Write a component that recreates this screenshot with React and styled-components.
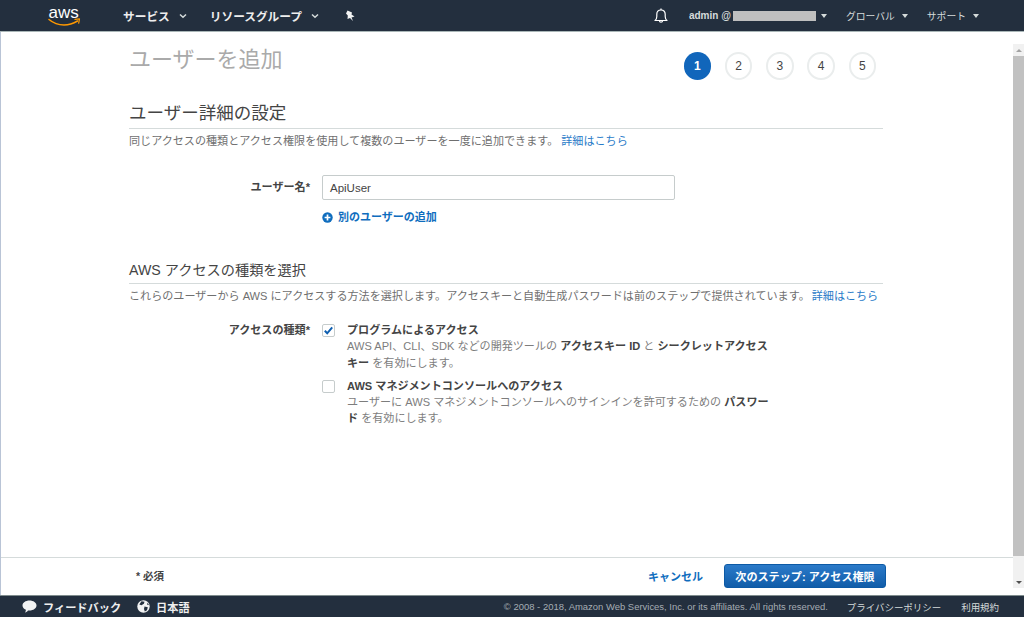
import React from 'react';
import styled, { createGlobalStyle } from 'styled-components';

const FONT = `"Liberation Sans", "Noto Sans CJK JP", sans-serif`;

const GlobalStyle = createGlobalStyle`
  html, body {
    margin: 0;
    padding: 0;
    height: 100%;
    overflow: hidden;
    background: #fff;
  }
  * { box-sizing: border-box; }
`;

const Page = styled.div`
  display: flex;
  flex-direction: column;
  height: 617px;
  width: 1024px;
  font-family: ${FONT};
  color: #444;
`;

const TopBar = styled.header`
  display: flex;
  align-items: center;
  height: 32px;
  flex-shrink: 0;
  background: #232f3e;
  border-bottom: 1px solid #aab7b8;
  padding-left: 48px;
`;

const Logo = styled.div`
  display: flex;
  width: 75px;
  margin-top: -1px;
`;

const NavItem = styled.div`
  display: flex;
  align-items: center;
  gap: 9px;
  color: #eee;
  font-size: 11.7px;
  font-weight: 700;
  margin-right: 23px;
  white-space: nowrap;
`;

const Pin = styled.div`
  display: flex;
  margin-left: 3px;
`;

const TopRight = styled.div`
  display: flex;
  align-items: center;
  margin-left: auto;
  padding-right: 45px;
`;

const Bell = styled.div`
  display: flex;
  margin-right: 21px;
`;

const Account = styled.div`
  display: flex;
  align-items: center;
  color: #d5dbdb;
  font-size: ${(p) => (p.$user ? 10 : 9.8)}px;
  font-weight: ${(p) => (p.$user ? 700 : 400)};
  white-space: nowrap;
  margin-left: ${(p) => p.$gap || 0}px;
`;

const Masked = styled.span`
  display: inline-block;
  width: 83px;
  height: 10px;
  margin-left: 2px;
  background: #bfbfbf;
`;

const Caret = styled.span`
  display: inline-block;
  width: 0;
  height: 0;
  margin-left: ${(p) => p.$gap || 7}px;
  border-left: 3.5px solid transparent;
  border-right: 3.5px solid transparent;
  border-top: 4px solid #d5dbdb;
`;

const Middle = styled.div`
  flex: 1;
  display: flex;
  min-height: 0;
  border-left: 1px solid #b9c4d6;
`;

const Column = styled.div`
  flex: 1;
  display: flex;
  flex-direction: column;
  min-width: 0;
`;

const Content = styled.main`
  flex: 1;
  padding: 0 130px 0 128px;
`;

const TitleRow = styled.div`
  display: flex;
  justify-content: space-between;
  height: 68px;
`;

const Title = styled.h1`
  margin: 13px 0 0;
  font-size: 22px;
  line-height: 30px;
  font-weight: 400;
  color: #aaa;
`;

const Steps = styled.ol`
  display: flex;
  gap: 13.75px;
  list-style: none;
  margin: 20px 7px 0 0;
  padding: 0;
`;

const Step = styled.li`
  display: flex;
  align-items: center;
  justify-content: center;
  width: 27.5px;
  height: 27.5px;
  border-radius: 50%;
  font-size: 12px;
  font-weight: ${(p) => (p.$active ? 700 : 400)};
  color: ${(p) => (p.$active ? '#fff' : '#444')};
  background: ${(p) => (p.$active ? '#1166bb' : '#fff')};
  border: ${(p) => (p.$active ? 'none' : '2px solid #eaeded')};
`;

const Section = styled.section`
  margin-top: ${(p) => p.$top || 0}px;
`;

const SectionTitle = styled.h2`
  margin: 0;
  padding-bottom: 2px;
  font-size: ${(p) => p.$size}px;
  line-height: ${(p) => p.$line}px;
  font-weight: 400;
  color: #444;
  border-bottom: 1px solid #d5dbdb;
`;

const Desc = styled.p`
  margin: 0;
  font-size: 11.08px;
  line-height: 25px;
  color: #6f6f6f;
  white-space: nowrap;
`;

const Link = styled.a`
  color: #2a7bc8;
  margin-left: ${(p) => p.$gap || 0}px;
`;

const FormRow = styled.div`
  display: grid;
  grid-template-columns: 181px 1fr;
  column-gap: 12px;
  margin-top: ${(p) => p.$top || 0}px;
`;

const Label = styled.label`
  font-size: 11.08px;
  line-height: ${(p) => p.$line}px;
  font-weight: 700;
  color: #444;
  text-align: right;
`;

const TextInput = styled.div`
  display: flex;
  align-items: center;
  width: 353px;
  height: 25px;
  padding-left: 7px;
  font-size: 11.5px;
  color: #444;
  background: #fff;
  border: 1px solid #c6cccc;
  border-radius: 2px;
`;

const AddLink = styled.a`
  display: flex;
  align-items: center;
  gap: 5px;
  margin-top: 10px;
  font-size: 11px;
  line-height: 15px;
  font-weight: 700;
  color: #0f6dbe;
`;

const CheckRow = styled.div`
  display: flex;
  gap: 12px;
  width: 447px;
  margin-bottom: 7px;
`;

const CheckBox = styled.span`
  display: flex;
  align-items: center;
  justify-content: center;
  flex-shrink: 0;
  width: 13px;
  height: 13px;
  margin-top: 2px;
  background: #fff;
  border: 1px solid #c6cccc;
  border-radius: 2px;
`;

const CheckText = styled.div`
  font-size: 11.08px;
  line-height: 16.3px;
  color: #7d7d7d;
`;

const CheckTitle = styled.div`
  font-weight: 700;
  color: #444;
`;

const Strong = styled.b`
  color: #444;
`;

const ActionBar = styled.div`
  display: flex;
  align-items: center;
  height: 38px;
  flex-shrink: 0;
  padding: 0 127px 1px 135px;
  border-top: 1px solid #d5dbdb;
`;

const Required = styled.span`
  margin-bottom: 2px;
  font-size: 10.5px;
  font-weight: 700;
  color: #444;
`;

const Cancel = styled.a`
  margin-left: auto;
  font-size: 11px;
  font-weight: 700;
  color: #0f6dbe;
`;

const NextButton = styled.button`
  height: 24px;
  width: 162px;
  margin-left: 21px;
  padding: 0;
  font-family: ${FONT};
  font-size: 11.1px;
  font-weight: 700;
  color: #fff;
  background: linear-gradient(#2b7ac9, #115da9);
  border: 1px solid #0d5aa5;
  border-radius: 3px;
`;

const Scrollbar = styled.div`
  display: flex;
  flex-direction: column;
  width: 11px;
  flex-shrink: 0;
  margin-top: 12px;
  margin-bottom: 7px;
  background: #f1f1f1;
`;

const ScrollButton = styled.div`
  display: flex;
  align-items: center;
  justify-content: center;
  height: 12px;
  flex-shrink: 0;
`;

const Arrow = styled.span`
  width: 0;
  height: 0;
  border-left: 3px solid transparent;
  border-right: 3px solid transparent;
  border-bottom: ${(p) => (p.$up ? '3px solid #a3a3a3' : 'none')};
  border-top: ${(p) => (p.$up ? 'none' : '3px solid #505050')};
`;

const ScrollThumb = styled.div`
  flex: 1;
  margin-bottom: 20px;
  background: #c1c1c1;
`;

const Footer = styled.footer`
  display: flex;
  align-items: center;
  height: 22px;
  flex-shrink: 0;
  padding: 0 25px 0 22px;
  background: #232f3e;
  border-top: 1px solid #7f8c8d;
`;

const FooterItem = styled.div`
  display: flex;
  align-items: center;
  gap: 6px;
  margin-right: 16px;
  color: #eee;
  font-size: 11.2px;
  font-weight: 700;
`;

const FooterRight = styled.div`
  display: flex;
  align-items: center;
  margin-left: auto;
  font-size: 9.46px;
  color: #a5adb3;
`;

const FooterLink = styled.a`
  margin-left: ${(p) => p.$gap}px;
  color: #d5dbdb;
`;

const AwsLogo = () => (
  <svg width="33" height="24" viewBox="0 0 33 24" fill="none">
    <text x="0.500" y="14.500" fontFamily="Liberation Sans, sans-serif" fontSize="17" fill="#fff">aws</text>
    <path d="M1 16.500c4.500 3.800 10 5.500 15 5.500 4.500 0 9-1.300 13.500-4" stroke="#f90" strokeWidth="1.500" strokeLinecap="round" />
    <path d="M27 16.400l4.500-.6-.8 4.300" stroke="#f90" strokeWidth="1.200" strokeLinecap="round" strokeLinejoin="round" />
  </svg>
);

const Chevron = () => (
  <svg width="8" height="6" viewBox="0 0 8 6" fill="none">
    <path d="M1 1.500l3 2.800 3-2.800" stroke="#d5dbdb" strokeWidth="1.500" />
  </svg>
);

const PinIcon = () => (
  <svg width="12" height="12" viewBox="0 0 12 12" fill="#f2f3f3">
    <path d="M2.500.5L7 2.500l-.5 2 3 2-3 1L8 11 5 8l-2.500 1 .3-3.500L1 3.500z" />
  </svg>
);

const BellIcon = () => (
  <svg width="14" height="16" viewBox="0 0 14 16" fill="none" stroke="#fff" strokeWidth="1.200">
    <path d="M1 12.500c1.300-1 1.800-2 1.800-4V6.200C2.800 3.800 4.600 2 7 2s4.200 1.800 4.200 4.200v2.300c0 2 .5 3 1.800 4z" strokeLinejoin="round" />
    <path d="M5.500 13c0 1.600 3 1.600 3 0M7 .6V2" />
  </svg>
);

const PlusCircle = () => (
  <svg width="11" height="11" viewBox="0 0 11 11">
    <circle cx="5.500" cy="5.500" r="5.200" fill="#0f6dbe" />
    <path d="M5.500 2.600v5.800M2.600 5.500h5.800" stroke="#fff" strokeWidth="1.700" />
  </svg>
);

const CheckMark = () => (
  <svg width="11" height="11" viewBox="0 0 11 11" fill="none">
    <path d="M1.800 5.800l2.400 2.500 5-6" stroke="#0f5fb0" strokeWidth="2" />
  </svg>
);

const BubbleIcon = () => (
  <svg width="15" height="13" viewBox="0 0 15 13" fill="#f2f3f3">
    <path d="M7.500.5c3.900 0 7 2.200 7 5s-3.100 5-7 5c-.5 0-1 0-1.500-.1-.6 1.100-1.700 1.800-3 2 .6-.8.900-1.700.9-2.700C1.700 8.800.5 7.300.5 5.500c0-2.800 3.100-5 7-5z" />
  </svg>
);

const GlobeIcon = () => (
  <svg width="13" height="13" viewBox="0 0 13 13">
    <circle cx="6.500" cy="6.500" r="6.200" fill="#f2f3f3" />
    <path d="M4.500 1.200l3 .6-.6 2-2.400 1.500-2.200-.8zM7.500 6.500l3.300.8-.8 3-2.200 1.300-.8-2.700zM10.600 2.600l1.300 2.400-1.800-.2z" fill="#232f3e" />
  </svg>
);

const STEPS = [1, 2, 3, 4, 5];

const App = () => (
  <Page>
    <GlobalStyle />
    <TopBar>
      <Logo><AwsLogo /></Logo>
      <NavItem>サービス <Chevron /></NavItem>
      <NavItem>リソースグループ <Chevron /></NavItem>
      <Pin><PinIcon /></Pin>
      <TopRight>
        <Bell><BellIcon /></Bell>
        <Account $user>admin @<Masked /><Caret $gap={5} /></Account>
        <Account $gap={19}>グローバル<Caret /></Account>
        <Account $gap={19}>サポート<Caret /></Account>
      </TopRight>
    </TopBar>
    <Middle>
      <Column>
        <Content>
          <TitleRow>
            <Title>ユーザーを追加</Title>
            <Steps>
              {STEPS.map((n) => (
                <Step key={n} $active={n === 1}>{n}</Step>
              ))}
            </Steps>
          </TitleRow>
          <Section>
            <SectionTitle $size={17.5} $line={26}>ユーザー詳細の設定</SectionTitle>
            <Desc>
              同じアクセスの種類とアクセス権限を使用して複数のユーザーを一度に追加できます。
              <Link $gap={3}>詳細はこちら</Link>
            </Desc>
          </Section>
          <FormRow $top={21}>
            <Label $line={24}>ユーザー名*</Label>
            <div>
              <TextInput>ApiUser</TextInput>
              <AddLink><PlusCircle />別のユーザーの追加</AddLink>
            </div>
          </FormRow>
          <Section $top={34}>
            <SectionTitle $size={14.2} $line={22}>AWS アクセスの種類を選択</SectionTitle>
            <Desc>
              これらのユーザーから AWS にアクセスする方法を選択します。アクセスキーと自動生成パスワードは前のステップで提供されています。
              <Link $gap={2}>詳細はこちら</Link>
            </Desc>
          </Section>
          <FormRow $top={13}>
            <Label $line={16.3}>アクセスの種類*</Label>
            <div>
              <CheckRow>
                <CheckBox><CheckMark /></CheckBox>
                <CheckText>
                  <CheckTitle>プログラムによるアクセス</CheckTitle>
                  AWS API、CLI、SDK などの開発ツールの <Strong>アクセスキー ID</Strong> と <Strong>シークレットアクセスキー</Strong> を有効にします。
                </CheckText>
              </CheckRow>
              <CheckRow>
                <CheckBox />
                <CheckText>
                  <CheckTitle>AWS マネジメントコンソールへのアクセス</CheckTitle>
                  ユーザーに AWS マネジメントコンソールへのサインインを許可するための <Strong>パスワード</Strong> を有効にします。
                </CheckText>
              </CheckRow>
            </div>
          </FormRow>
        </Content>
        <ActionBar>
          <Required>* 必須</Required>
          <Cancel>キャンセル</Cancel>
          <NextButton>次のステップ: アクセス権限</NextButton>
        </ActionBar>
      </Column>
      <Scrollbar>
        <ScrollButton><Arrow $up /></ScrollButton>
        <ScrollThumb />
        <ScrollButton><Arrow /></ScrollButton>
      </Scrollbar>
    </Middle>
    <Footer>
      <FooterItem><BubbleIcon />フィードバック</FooterItem>
      <FooterItem><GlobeIcon />日本語</FooterItem>
      <FooterRight>
        © 2008 - 2018, Amazon Web Services, Inc. or its affiliates. All rights reserved.
        <FooterLink $gap={19}>プライバシーポリシー</FooterLink>
        <FooterLink $gap={20}>利用規約</FooterLink>
      </FooterRight>
    </Footer>
  </Page>
);

export default App;
